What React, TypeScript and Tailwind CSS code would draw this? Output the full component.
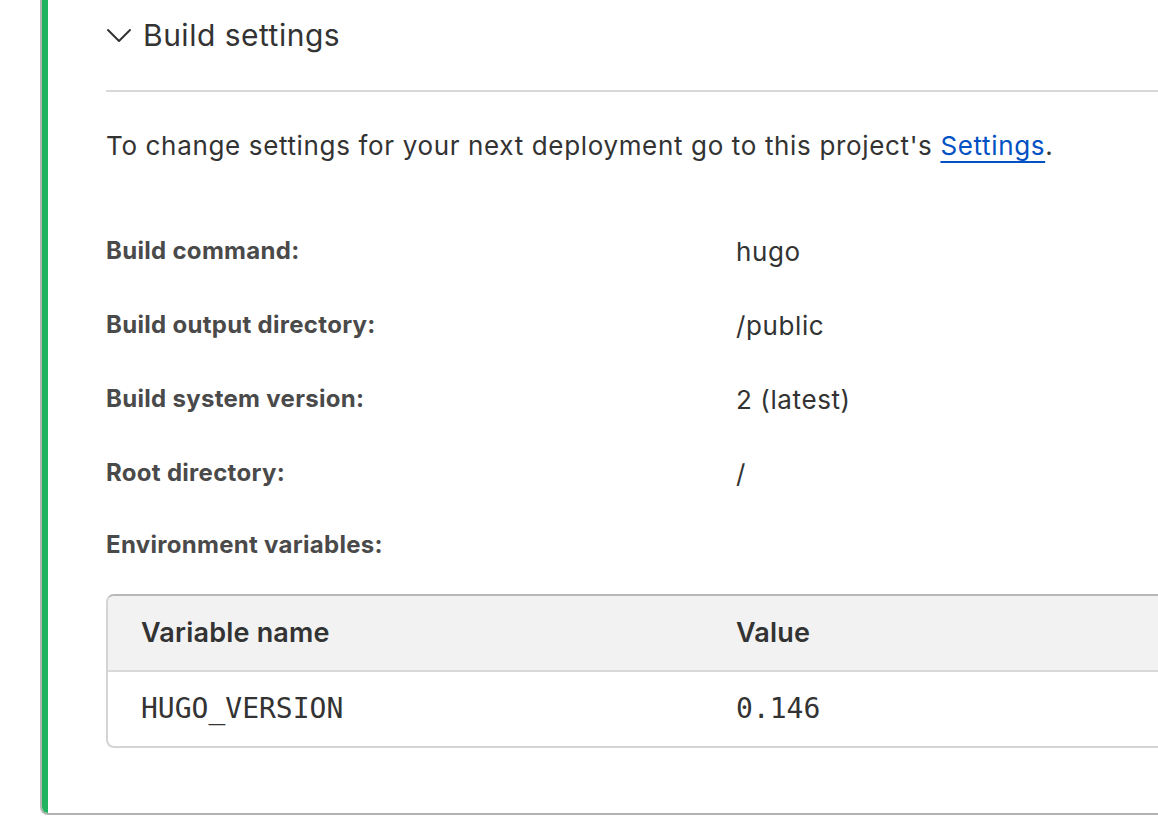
import React from "react";

type Setting = {
  label: string;
  value: string;
};

const settings: Setting[] = [
  { label: "Build command:", value: "hugo" },
  { label: "Build output directory:", value: "/public" },
  { label: "Build system version:", value: "2 (latest)" },
  { label: "Root directory:", value: "/" },
];

const envVars = [{ name: "HUGO_VERSION", value: "0.146" }];

const sans = "font-['Inter','Noto_Sans',sans-serif]";
const mono = "font-['DejaVu_Sans_Mono','Liberation_Mono',monospace]";

function Chevron() {
  return (
    <svg width="26" height="16" viewBox="0 0 26 16" fill="none" className="shrink-0">
      <polyline points="2,3 13,14 24,3" stroke="#333" strokeWidth="2" strokeLinecap="round" strokeLinejoin="round" />
    </svg>
  );
}

export default function App() {
  return (
    <div className={`w-[1158px] h-[834px] overflow-hidden bg-white pl-[40px] ${sans}`}>
      {/* Card (top and right run past the viewport) */}
      <div className="w-[1160px] border-l-2 border-b-2 border-[#b3b3b3] rounded-bl-[8px]">
        <div className="border-l-[6px] border-[#21b35f] rounded-bl-[6px] pl-[58px] pb-[65px]">
          {/* Header */}
          <div className="h-[70px] flex items-center gap-[11px] text-[#333]">
            <Chevron />
            <span className="text-[30px] leading-none tracking-[0.5px]">Build settings</span>
          </div>
          <div className="mt-[20px] h-[2px] bg-[#d9d9d9]" />

          <p className="mt-[36px] text-[26px] leading-[36px] tracking-[0.65px] text-[#333]">
            To change settings for your next deployment go to this project's{" "}
            <a href="#" className="text-[#0051c3] underline decoration-2 underline-offset-[6px]">
              Settings
            </a>
            .
          </p>

          {/* Settings list */}
          <div className="mt-[50px]">
            {settings.map((s) => (
              <div key={s.label} className="h-[74px] flex items-center">
                <div className="w-[630px] text-[24px] font-bold tracking-[0.3px] text-[#4a4a4a]">{s.label}</div>
                <div className="text-[26px] tracking-[0.6px] text-[#333]">{s.value}</div>
              </div>
            ))}
            <div className="h-[70px] flex items-center text-[24px] font-bold tracking-[0.3px] text-[#4a4a4a]">
              Environment variables:
            </div>
          </div>

          {/* Env var table */}
          <div className="mt-[14px] border-2 border-[#d4d4d4] border-t-[#b8b8b8] border-r-0 rounded-l-[8px] overflow-hidden">
            <div className="h-[74px] flex items-center bg-[#f2f2f2] text-[27px] font-semibold tracking-[0.2px] text-[#333]">
              <div className="w-[628px] pl-[33px]">Variable name</div>
              <div>Value</div>
            </div>
            {envVars.map((v) => (
              <div key={v.name} className={`h-[76px] flex items-center border-t-2 border-[#d9d9d9] text-[28px] text-[#333] ${mono}`}>
                <div className="w-[628px] pl-[33px]">{v.name}</div>
                <div>{v.value}</div>
              </div>
            ))}
          </div>
        </div>
      </div>
    </div>
  );
}
